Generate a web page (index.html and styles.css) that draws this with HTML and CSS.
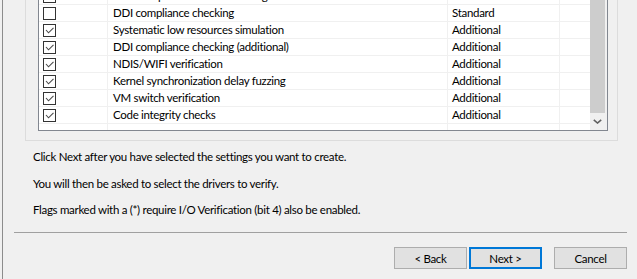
FILE: index.html
```html
<!DOCTYPE html>
<html>
<head>
<meta charset="utf-8">
<link rel="stylesheet" href="styles.css">
</head>
<body>
<div class="window">
  <div class="group">
    <div class="list">
      <div class="rows">
        <div class="row first">
          <div class="c c1"><span class="cb"><svg viewBox="0 0 11 11" width="11" height="11"><polyline points="2,5 4.5,7.8 9.5,2.8" class="tick"/></svg></span></div>
          <div class="c c2">Port/miniport interface checking</div>
          <div class="c c3">Additional</div>
          <div class="c c4"></div>
        </div>
        <div class="row">
          <div class="c c1"><span class="cb"></span></div>
          <div class="c c2">DDI compliance checking</div>
          <div class="c c3">Standard</div>
          <div class="c c4"></div>
        </div>
        <div class="row">
          <div class="c c1"><span class="cb"><svg viewBox="0 0 11 11" width="11" height="11"><polyline points="2,5 4.5,7.8 9.5,2.8" class="tick"/></svg></span></div>
          <div class="c c2">Systematic low resources simulation</div>
          <div class="c c3">Additional</div>
          <div class="c c4"></div>
        </div>
        <div class="row">
          <div class="c c1"><span class="cb"><svg viewBox="0 0 11 11" width="11" height="11"><polyline points="2,5 4.5,7.8 9.5,2.8" class="tick"/></svg></span></div>
          <div class="c c2">DDI compliance checking (additional)</div>
          <div class="c c3">Additional</div>
          <div class="c c4"></div>
        </div>
        <div class="row">
          <div class="c c1"><span class="cb"><svg viewBox="0 0 11 11" width="11" height="11"><polyline points="2,5 4.5,7.8 9.5,2.8" class="tick"/></svg></span></div>
          <div class="c c2">NDIS/WIFI verification</div>
          <div class="c c3">Additional</div>
          <div class="c c4"></div>
        </div>
        <div class="row">
          <div class="c c1"><span class="cb"><svg viewBox="0 0 11 11" width="11" height="11"><polyline points="2,5 4.5,7.8 9.5,2.8" class="tick"/></svg></span></div>
          <div class="c c2">Kernel synchronization delay fuzzing</div>
          <div class="c c3">Additional</div>
          <div class="c c4"></div>
        </div>
        <div class="row">
          <div class="c c1"><span class="cb"><svg viewBox="0 0 11 11" width="11" height="11"><polyline points="2,5 4.5,7.8 9.5,2.8" class="tick"/></svg></span></div>
          <div class="c c2">VM switch verification</div>
          <div class="c c3">Additional</div>
          <div class="c c4"></div>
        </div>
        <div class="row">
          <div class="c c1"><span class="cb"><svg viewBox="0 0 11 11" width="11" height="11"><polyline points="2,5 4.5,7.8 9.5,2.8" class="tick"/></svg></span></div>
          <div class="c c2">Code integrity checks</div>
          <div class="c c3">Additional</div>
          <div class="c c4"></div>
        </div>
        <div class="row filler">
          <div class="c c1"></div>
          <div class="c c2"></div>
          <div class="c c3"></div>
          <div class="c c4"></div>
        </div>
      </div>
      <div class="scrollbar">
        <div class="thumb"></div>
        <div class="arrow"><svg viewBox="0 0 9 5" width="9" height="5"><polyline points="0.8,0.8 4.5,4 8.2,0.8" class="chev"/></svg></div>
      </div>
    </div>
  </div>
  <div class="notes">
    <p>Click Next after you have selected the settings you want to create.</p>
    <p>You will then be asked to select the drivers to verify.</p>
    <p>Flags marked with a (*) require I/O Verification (bit 4) also be enabled.</p>
  </div>
  <div class="sep"></div>
  <div class="buttons">
    <button class="btn">&lt; Back</button>
    <button class="btn default">Next &gt;</button>
    <button class="btn cancel">Cancel</button>
  </div>
</div>
</body>
</html>
```
FILE: styles.css
```css
* { box-sizing: border-box; }
html, body { margin: 0; background: #f0f0f0; }
body {
  font-family: Lato, "Liberation Sans", sans-serif;
  font-size: 11.5px;
  letter-spacing: -0.3px;
  color: #000;
  width: 637px;
  height: 279px;
  overflow: hidden;
}
.window {
  margin-left: 2px;
  border-left: 1px solid #8c8c8c;
  height: 279px;
}
.group {
  margin-left: 22px;
  width: 593px;
  height: 141px;
  border: 1px solid #dcdcdc;
  border-top: 0;
  padding: 0 9px 9px 12px;
}
.list {
  height: 131px;
  border: 1px solid #828790;
  border-top: 0;
  background: #fff;
  display: flex;
}
.rows {
  flex: 1;
  overflow: hidden;
  display: flex;
  flex-direction: column;
}
.row {
  display: flex;
  flex: none;
  height: 17px;
  border-bottom: 1px solid #f0f0f0;
}
.row.first { margin-top: -12px; }
.row.filler { flex: 1; border-bottom: 0; }
.c {
  display: flex;
  align-items: center;
  white-space: nowrap;
  overflow: hidden;
  border-right: 1px solid #f0f0f0;
  line-height: 16px;
}
.c1 { width: 69px; padding-left: 4px; }
.c2 { width: 340px; padding-left: 5px; }
.c3 { width: 112px; padding-left: 4px; }
.c4 { flex: 1; border-right: 0; }
.cb {
  display: block;
  width: 13px;
  height: 13px;
  border: 1px solid #333;
  background: #fff;
}
.cb svg { display: block; }
.tick { fill: none; stroke: #4a4a4a; stroke-width: 1.1; }
.scrollbar {
  width: 17px;
  background: #f0f0f0;
  display: flex;
  flex-direction: column;
}
.thumb { flex: 1; width: 15px; background: #cdcdcd; }
.arrow {
  height: 17px;
  display: flex;
  align-items: center;
  justify-content: center;
  padding-right: 2px;
}
.arrow svg { display: block; }
.chev { fill: none; stroke: #606060; stroke-width: 1.6; }
.notes {
  margin: 8px 0 0 30px;
  display: flex;
  flex-direction: column;
  gap: 10.5px;
}
.notes p { margin: 0; line-height: 16px; }
.sep {
  margin: 14px 0 0 11px;
  width: 613px;
  height: 1px;
  background: #a0a0a0;
}
.buttons {
  display: flex;
  justify-content: flex-end;
  padding-right: 10px;
  margin-top: 14px;
}
.btn {
  width: 73px;
  height: 22px;
  padding: 0;
  border: 1px solid #adadad;
  background: #e1e1e1;
  font: inherit;
  letter-spacing: -0.3px;
  color: #000;
}
.btn + .btn { margin-left: 2px; }
.btn.cancel { margin-left: 12px; }
.btn.default { border: 2px solid #0078d7; }
```
